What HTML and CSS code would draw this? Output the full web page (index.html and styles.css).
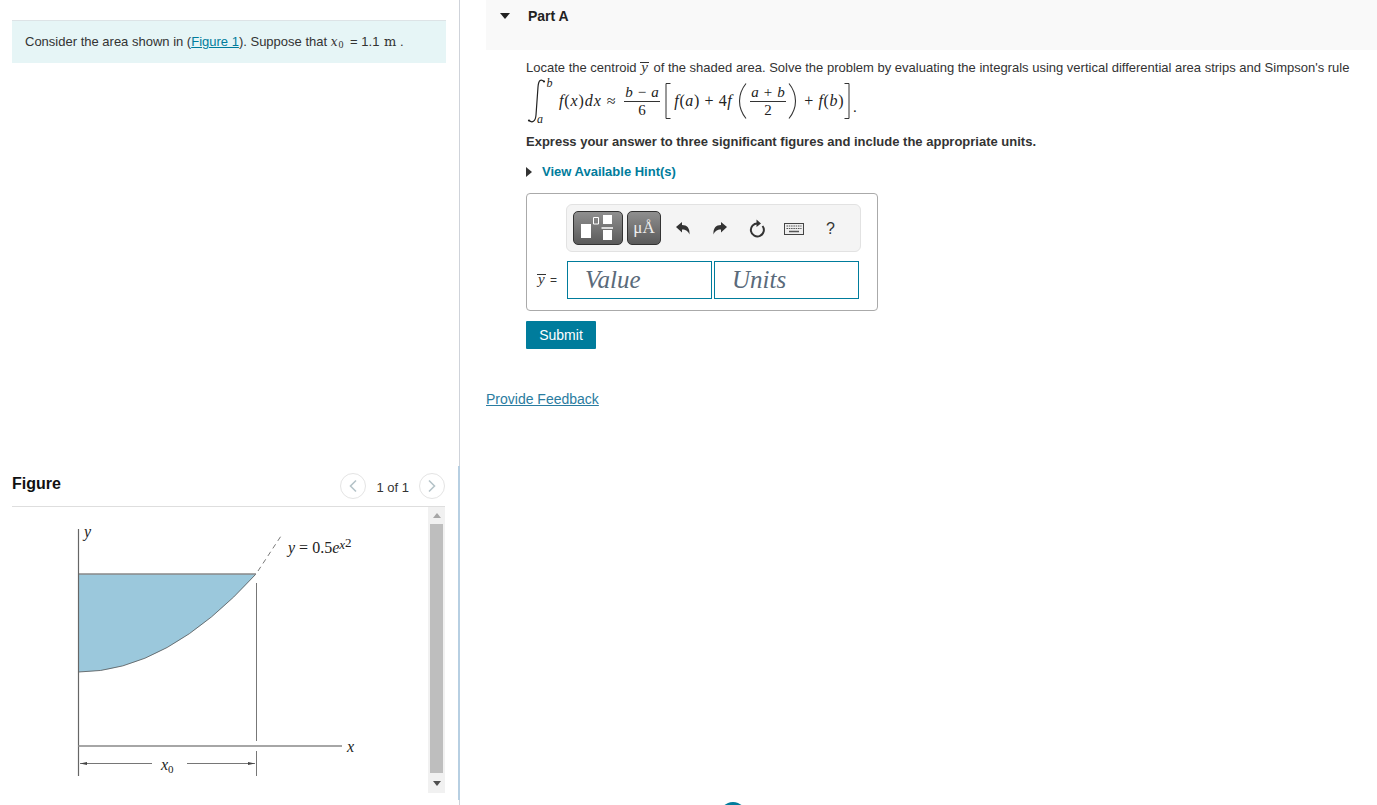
FILE: index.html
```html
<!DOCTYPE html>
<html lang="en">
<head>
    <meta charset="UTF-8">
    <title>Part A - Centroid</title>
    <link rel="stylesheet" href="styles.css">
</head>
<body>
    <div class="main-wrapper">
        <aside class="left-panel">
            <div class="intro-box">
                Consider the area shown in (<a href="#" class="link">Figure 1</a>). Suppose that
                <span class="math-tt">x</span><span class="math-sub">0</span> = 1.1 <span class="math-unit">m</span> .
            </div>

            <section class="figure-panel">
                <header class="figure-head">
                    <h2 class="figure-title">Figure</h2>
                    <div class="pager">
                        <span class="pager-btn">
                            <svg width="10" height="14" viewBox="0 0 10 14"><path d="M8 1.5 2.5 7 8 12.5" fill="none" stroke="#b5c3c8" stroke-width="1.6"/></svg>
                        </span>
                        <span class="pager-text">1 of 1</span>
                        <span class="pager-btn">
                            <svg width="10" height="14" viewBox="0 0 10 14"><path d="M2 1.5 7.5 7 2 12.5" fill="none" stroke="#b5c3c8" stroke-width="1.6"/></svg>
                        </span>
                    </div>
                </header>
                <div class="figure-body">
                    <svg class="figure-svg" width="416" height="286" viewBox="12 507 416 286">
                        <path d="M78.5 574H256Q167 672 78.500 672Z" fill="#9bc8dc"/>
                        <path d="M78.5 672Q167 672 256 574" fill="none" stroke="#555" stroke-width="0.8"/>
                        <path d="M78 574H256" stroke="#888" stroke-width="1.6"/>
                        <path d="M258 571 281 536" stroke="#555" stroke-width="0.8" stroke-dasharray="5 4" fill="none"/>
                        <path d="M78.5 529V776" stroke="#666" stroke-width="1.2"/>
                        <path d="M256.5 583V741M256.5 751V776" stroke="#777" stroke-width="1"/>
                        <path d="M78 746H342" stroke="#888" stroke-width="1.6"/>
                        <path d="M80 763.5H152M187 763.5H255" stroke="#666" stroke-width="0.9"/>
                        <path d="M80 763.5 87 762V765ZM255 763.5 248 762V765Z" fill="#444"/>
                        <text class="fig-label" x="84" y="537">y</text>
                        <text class="fig-label" x="161" y="770">x<tspan class="fig-sub" dy="3">0</tspan></text>
                        <text class="fig-label" x="347" y="752">x</text>
                        <text class="fig-label" x="288" y="553">y<tspan class="fig-up"> = 0.5</tspan>e<tspan class="fig-sup" dy="-4">x</tspan><tspan class="fig-sup2" dy="-2">2</tspan></text>
                    </svg>
                    <div class="scrollbar">
                        <span class="scroll-up"></span>
                        <span class="scroll-thumb"></span>
                        <span class="scroll-down"></span>
                    </div>
                </div>
            </section>
        </aside>

        <main class="right-panel">
            <header class="part-head">
                <span class="part-arrow"></span>
                <h2 class="part-title">Part A</h2>
            </header>

            <div class="part-body">
                <p class="question">Locate the centroid <span class="math-bar">y</span> of the shaded area. Solve the problem by evaluating the integrals using vertical differential area strips and Simpson's rule</p>

                <div class="rule">
                    <span class="int-wrap">
                        <svg class="int-sign" width="27" height="48" viewBox="0 0 27 48"><path d="M18 4.500C15 1.500 12.500 3 12 10L10 38C9.500 45 6 46 3 43.500" fill="none" stroke="#222" stroke-width="1.200"/><circle cx="18" cy="4.500" r="1.100" fill="#222"/><circle cx="3" cy="43.500" r="1.100" fill="#222"/></svg>
                        <i class="limit-top">b</i>
                        <i class="limit-bottom">a</i>
                    </span>
                    <span class="rule-text rule-first"><i>f</i>(<i>x</i>)<i>dx</i> ≈</span>
                    <span class="frac"><span class="frac-top"><i>b</i> − <i>a</i></span><span>6</span></span>
                    <svg class="bracket bracket-open" width="6" height="36" viewBox="0 0 6 36"><path d="M5.5 .5H1V35.5H5.5" fill="none" stroke="#333"/></svg>
                    <span class="rule-text"><i>f</i>(<i>a</i>) + 4<i>f</i></span>
                    <svg class="paren" width="9" height="36" viewBox="0 0 9 36"><path d="M8 .5C2 8 1.500 13 1.500 18S2 28 8 35.500" fill="none" stroke="#333" stroke-width="1.100"/></svg>
                    <span class="frac"><span class="frac-top"><i>a</i> + <i>b</i></span><span>2</span></span>
                    <svg class="paren" width="9" height="36" viewBox="0 0 9 36"><path d="M1 .5C7 8 7.500 13 7.500 18S7 28 1 35.500" fill="none" stroke="#333" stroke-width="1.100"/></svg>
                    <span class="rule-text rule-last">+ <i>f</i>(<i>b</i>)</span>
                    <svg class="bracket" width="6" height="36" viewBox="0 0 6 36"><path d="M.5 .5H5V35.5H.5" fill="none" stroke="#333"/></svg>
                    <span class="rule-dot">.</span>
                </div>

                <p class="instruction">Express your answer to three significant figures and include the appropriate units.</p>

                <a href="#" class="hint-link"><span class="hint-arrow"></span>View Available Hint(s)</a>

                <form class="answer-box">
                    <div class="toolbar">
                        <button type="button" class="tool-btn tool-templates">
                            <svg width="38" height="28" viewBox="0 0 38 28">
                                <path d="M2 10H12V24H2ZM24 1H33V10H24ZM24 16H33V26H24Z" fill="#fff"/>
                                <path d="M22.500 14H34" stroke="#fff" stroke-width="1.500"/>
                                <path d="M14.500 3.500H19.500V10H14.500Z" fill="none" stroke="#fff"/>
                            </svg>
                        </button>
                        <button type="button" class="tool-btn tool-units">μÅ</button>
                        <span class="tool-icon">
                            <svg width="16" height="16" viewBox="0 0 16 16"><path d="M1 6 7 1V4C12 4 15 7 14.500 13.500 13 10 11 8.500 7 8.500V11.500Z" fill="#333"/></svg>
                        </span>
                        <span class="tool-icon">
                            <svg width="16" height="16" viewBox="0 0 16 16"><path d="M15 6 9 1V4C4 4 1 7 1.500 13.500 3 10 5 8.500 9 8.500V11.500Z" fill="#333"/></svg>
                        </span>
                        <span class="tool-icon">
                            <svg width="18" height="20" viewBox="0 0 18 20"><path d="M9.800 4.500A6.500 6.500 0 1 0 14.500 7" fill="none" stroke="#333" stroke-width="2"/><path d="M8.500 .5 13 4.500 8.500 8Z" fill="#333"/></svg>
                        </span>
                        <span class="tool-icon">
                            <svg width="20" height="12" viewBox="0 0 20 12"><rect x=".5" y=".5" width="19" height="11" fill="#eee" stroke="#444"/><path d="M2.500 3H17.500M2.500 5.500H17.500" stroke="#555" stroke-dasharray="1.500 .8"/><path d="M5 8.500H15" stroke="#555" stroke-width="1.500"/></svg>
                        </span>
                        <span class="tool-icon tool-help">?</span>
                    </div>
                    <div class="answer-row">
                        <label class="answer-label"><span class="math-bar">y</span> =</label>
                        <input class="answer-input" type="text" placeholder="Value">
                        <input class="answer-input" type="text" placeholder="Units">
                    </div>
                </form>

                <button type="button" class="submit-btn">Submit</button>
            </div>

            <a href="#" class="feedback-link">Provide Feedback</a>
        </main>
    </div>
    <span class="help-dot"></span>
</body>
</html>
```

FILE: styles.css
```css
/* Page */
html, body {
    height: 100%;
}

body {
    margin: 0;
    font-family: 'Liberation Sans', Arial, sans-serif;
    font-size: 13px;
    color: #333;
    background: #fff;
    overflow: hidden;
}

.main-wrapper {
    display: flex;
    align-items: flex-start;
}

.link {
    color: #007c9c;
}

/* Left column */
.left-panel {
    width: 460px;
    height: 805px;
    box-sizing: border-box;
    flex-shrink: 0;
    padding: 20px 13px 0 12px;
    border-right: 1px solid #cfd3da;
    position: relative;
}

.intro-box {
    height: 43px;
    box-sizing: border-box;
    padding-top: 13px;
    padding-left: 13px;
    background: #e6f5f6;
    border-top: 1px solid #dde3e6;
    line-height: 16px;
}

.math-tt,
.math-unit {
    font-family: 'DejaVu Serif', serif;
    font-size: 12px;
}

.math-tt {
    font-style: italic;
    margin-right: 1px;
}

.math-unit {
    font-size: 13px;
    margin-left: 1px;
}

.math-sub {
    font-family: 'Liberation Serif', serif;
    font-size: 10px;
    vertical-align: -2px;
    margin-right: 3px;
}

.figure-panel {
    margin-top: 401px;
    border-right: 2px solid transparent;
}

.figure-panel::after {
    content: "";
    position: absolute;
    top: 466px;
    bottom: 5px;
    right: -1px;
    border-right: 2px solid #b7cfe2;
}

.figure-head {
    display: flex;
    justify-content: space-between;
    align-items: center;
    height: 43px;
    margin-right: -1px;
    border-bottom: 1px solid #dedede;
    box-sizing: border-box;
}

.figure-title {
    margin: 0 0 3px;
    font-size: 16px;
    font-weight: 700;
    color: #111;
}

.pager {
    display: flex;
    align-items: center;
    gap: 10px;
    margin-top: 2px;
}

.pager-btn {
    display: flex;
    align-items: center;
    justify-content: center;
    width: 24px;
    height: 24px;
    border: 1px solid #e4e4e4;
    border-radius: 50%;
}

.pager-text {
    padding-top: 2px;
}

.figure-body {
    display: flex;
    margin-right: -1px;
}

.figure-svg {
    display: block;
}

.fig-label {
    font-family: 'Liberation Serif', serif;
    font-style: italic;
    font-size: 16px;
    fill: #222;
}

.fig-up {
    font-style: normal;
}

.fig-sub {
    font-style: normal;
    font-size: 11px;
}

.fig-sup {
    font-size: 13px;
}

.fig-sup2 {
    font-style: normal;
    font-size: 13px;
}

.scrollbar {
    display: flex;
    flex-direction: column;
    align-items: center;
    width: 17px;
    height: 286px;
    background: #f1f1f1;
    box-sizing: border-box;
}

.scroll-thumb {
    width: 13px;
    height: 249px;
    background: #bebebe;
}

.scroll-up,
.scroll-down {
    width: 0;
    height: 0;
    border-left: 4px solid transparent;
    border-right: 4px solid transparent;
}

.scroll-up {
    margin: 6px 0 6px;
    border-bottom: 5px solid #a6a6a6;
}

.scroll-down {
    margin-top: 8px;
    border-top: 5px solid #505050;
}

/* Right column */
.right-panel {
    flex: 1;
    padding-left: 26px;
}

.part-head {
    display: flex;
    align-items: flex-start;
    height: 50px;
    box-sizing: border-box;
    padding: 8px 0 0 14px;
    background: #f9f9f9;
}

.part-arrow {
    width: 0;
    height: 0;
    margin: 5px 18px 0 0;
    border-left: 5.5px solid transparent;
    border-right: 5.5px solid transparent;
    border-top: 6px solid #222;
}

.part-title {
    margin: 0;
    font-size: 14px;
    line-height: 16px;
    font-weight: 700;
    color: #222;
}

.part-body {
    padding-left: 40px;
}

.question {
    margin: 10px 0 0;
    line-height: 16px;
}

.math-bar {
    display: inline-block;
    line-height: 9px;
    padding: 0 1px;
    margin-right: 1px;
    border-top: 1px solid #333;
    font-family: 'Liberation Serif', serif;
    font-style: italic;
    font-size: 15px;
}

/* Simpson's rule line */
.rule {
    display: flex;
    align-items: center;
    height: 48px;
    margin-top: 1px;
    font-family: 'Liberation Serif', serif;
    font-size: 15px;
    letter-spacing: .6px;
    color: #222;
    white-space: nowrap;
}

.int-wrap {
    position: relative;
    display: block;
    width: 27px;
    height: 48px;
}

.int-sign {
    display: block;
}

.limit-top,
.limit-bottom {
    position: absolute;
    font-size: 12px;
    line-height: 12px;
}

.limit-top {
    top: 0;
    right: 0;
}

.limit-bottom {
    bottom: 0;
    left: 11px;
}

.rule-text {
    margin: 0 6px 0 0;
    font-size: 16px;
    letter-spacing: .6px;
}

.rule-first {
    margin: 0 8px 0 6px;
    letter-spacing: .9px;
}

.rule-last {
    margin: 0 0 0 4px;
}

.frac {
    display: flex;
    flex-direction: column;
    align-items: center;
    margin-right: 2px;
    line-height: 17px;
    margin-top: 1px;
}

.frac-top {
    padding: 0 1px;
    border-bottom: 1px solid #333;
}

.bracket {
    margin-right: 3px;
}

.bracket-open {
    margin-left: 3px;
}

.paren {
    margin-right: 3px;
}

.rule-dot {
    margin-top: 12px;
}

.instruction {
    margin: 9px 0 0;
    font-weight: 700;
    line-height: 16px;
}

.hint-link {
    display: flex;
    align-items: center;
    margin-top: 14px;
    line-height: 16px;
    font-weight: 700;
    color: #007c9c;
    text-decoration: none;
}

.hint-arrow {
    width: 0;
    height: 0;
    margin-right: 10px;
    border-top: 5px solid transparent;
    border-bottom: 5px solid transparent;
    border-left: 6px solid #333;
}

/* Answer box */
.answer-box {
    width: 352px;
    height: 118px;
    box-sizing: border-box;
    margin-top: 13px;
    padding: 10px 16px 0 10px;
    border: 1px solid #aaa;
    border-radius: 4px;
}

.toolbar {
    display: flex;
    align-items: center;
    height: 48px;
    box-sizing: border-box;
    margin-left: 29px;
    padding-left: 6px;
    background: #f4f4f4;
    border: 1px solid #e2e2e2;
    border-radius: 6px;
}

.tool-btn {
    display: flex;
    align-items: center;
    justify-content: center;
    height: 34px;
    padding: 0;
    border: 1px solid #333;
    border-radius: 5px;
    background: linear-gradient(to bottom, #8f8f8f, #5a5a5a);
    color: #fff;
}

.tool-templates {
    width: 50px;
}

.tool-units {
    width: 34px;
    margin-left: 4px;
    margin-right: 3px;
    font-family: 'Liberation Serif', serif;
    font-size: 17px;
    color: #eee;
}

.tool-icon {
    display: flex;
    justify-content: center;
    align-items: center;
    width: 37px;
    height: 34px;
    padding-top: 2px;
}

.tool-help {
    font-size: 16px;
    color: #333;
}

.answer-row {
    display: flex;
    align-items: center;
    margin-top: 9px;
}

.answer-label {
    width: 30px;
    font-size: 12px;
    white-space: nowrap;
}

.answer-input {
    width: 145px;
    height: 38px;
    box-sizing: border-box;
    margin-right: 2px;
    padding: 0 0 0 17px;
    border: 1px solid #007c9c;
    border-radius: 0;
    outline: none;
    font-family: 'Liberation Serif', serif;
    font-style: italic;
    font-size: 25px;
}

.answer-input::placeholder {
    color: #5a6a7a;
    opacity: 1;
}

.submit-btn {
    display: block;
    width: 70px;
    height: 28px;
    margin-top: 10px;
    padding: 0;
    border: none;
    border-radius: 1px;
    background: #007c9c;
    color: #fff;
    font-family: 'Liberation Sans', Arial, sans-serif;
    font-size: 14px;
}

.feedback-link {
    display: inline-block;
    margin-top: 42px;
    font-size: 14px;
    line-height: 16px;
    color: #2a7ca0;
}

.help-dot {
    position: fixed;
    left: 720px;
    top: 802px;
    width: 26px;
    height: 26px;
    border-radius: 50%;
    background: #007c9c;
}
```
